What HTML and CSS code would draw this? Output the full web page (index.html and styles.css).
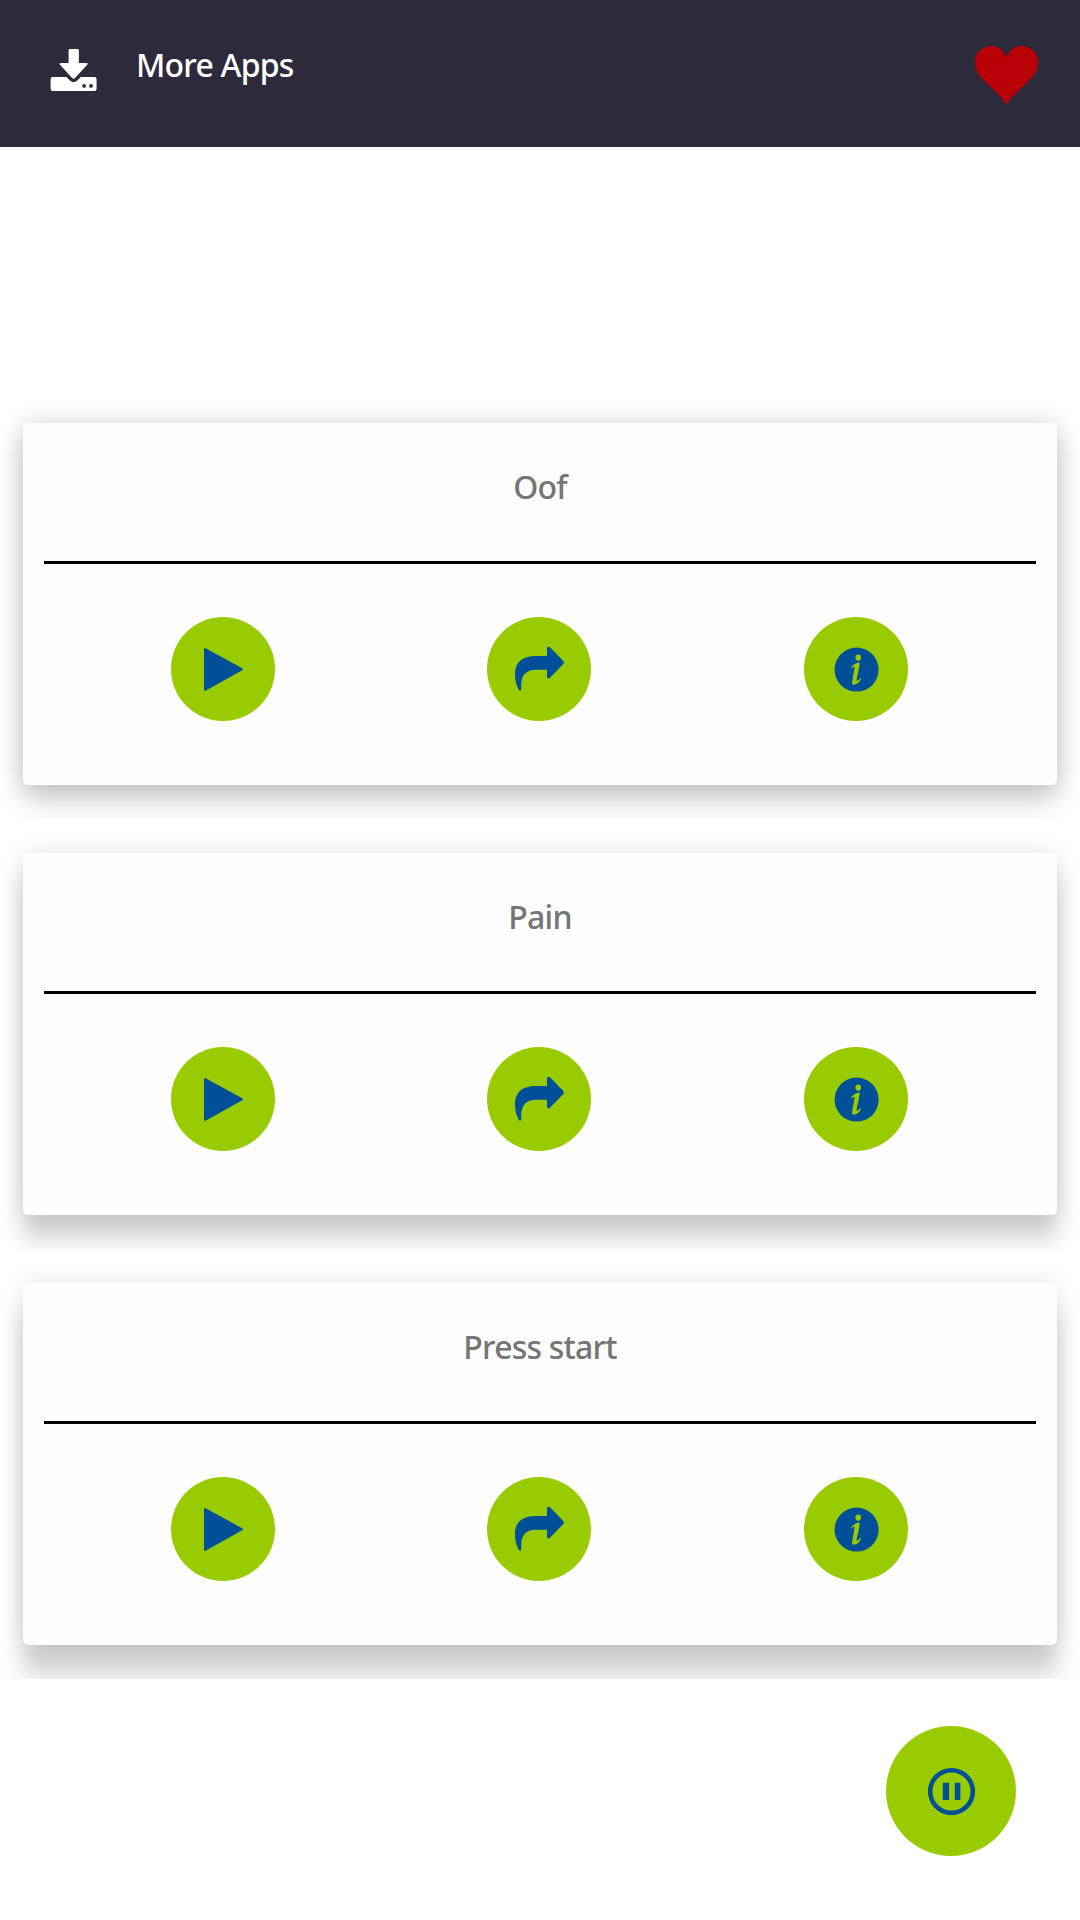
FILE: index.html
```html
<!DOCTYPE html>
<html lang="en">

<head>
    <meta charset="UTF-8">
    <meta name="viewport" content="width=device-width, initial-scale=1.0">
    <title>Sounds</title>
    <link rel="stylesheet" href="styles.css">
</head>

<body>
    <!-- icons used more than once -->
    <svg class="symbols">
        <symbol id="play" viewBox="0 0 104 104">
            <path d="M33 32.4Q33 30.4 35 31.4L71.2 51.3Q72.6 52.3 71.2 53.3L35 73.6Q33 74.6 33 72.6Z" />
        </symbol>
        <symbol id="share" viewBox="0 0 104 104">
            <path d="M60 39V31.5Q60 29.8 61.6 29.8Q62.4 29.8 63.2 30.6L76.3 44Q77.6 45.5 76.3 47L63.2 60.6Q62.4 61.5 61.4 61.5Q60 61.5 60 59.8V52.7H49C38 52.7 33.6 59 34.3 71C34.4 74.4 32.6 74.3 31.5 72.2C29 67.5 28 62.5 28 57C28 45 35.5 39 49 39Z" />
        </symbol>
        <symbol id="info" viewBox="0 0 104 104">
            <circle cx="52.6" cy="52.6" r="22" />
            <ellipse class="mark" cx="54.2" cy="40.6" rx="2.8" ry="3.1" />
            <path class="mark" d="M46.8 51.6C48.5 48.2 52 45.6 55.7 45.6C55.5 51 53.2 58.5 52.4 63.8C53.8 64 55.2 62.4 57.1 60.6C56.7 64.5 53 67.700 49.8 67.700C48.2 67.700 47.9 66.3 48.2 64.2L50.7 49.9C49.6 49.8 48.4 50.5 46.8 51.6Z" />
        </symbol>
    </svg>

    <header class="toolbar">
        <svg class="download" viewBox="0.4 0 46 42">
            <path d="M19.5 0h7.4q1.4 0 1.4 1.4V14h7.6q2.2 0 .7 1.7L24.5 28.9q-1.5 1.5-3 0L9.4 15.7Q8 14 10 14h8V1.4Q18 0 19.5 0Z" />
            <path fill-rule="evenodd" d="M2.2 28h13.6l3.8 3.8q3.4 2.7 6.8 0L30.2 28h13.6q2.200 0 2.200 2.200v9.600q0 2.200-2.200 2.200H2.200Q0 42 0 39.800v-9.600Q0 28 2.200 28ZM33.500 35a1.900 1.900 0 1 0 0 3.800a1.900 1.900 0 1 0 0-3.800ZM40.400 35a1.900 1.900 0 1 0 0 3.800a1.900 1.900 0 1 0 0-3.800Z" />
        </svg>
        <h1 class="title">More Apps</h1>
        <svg class="heart" viewBox="0 0 63 59">
            <path d="M31.5 59C28 52 21 46 14 39.5C6 32 0 26 0 16.5C0 7 7 0 16.5 0C23.5 0 28.5 4.2 31.5 11C34.5 4.2 39.5 0 46.5 0C56 0 63 7 63 16.5C63 26 57 32 49 39.5C42 46 35 52 31.5 59Z" />
        </svg>
    </header>

    <main class="list">
        <div class="item">
            <div class="card low">
                <h2 class="name">Oof</h2>
                <div class="buttons">
                    <button class="round"><svg><use href="#play" /></svg></button>
                    <button class="round"><svg><use href="#share" /></svg></button>
                    <button class="round"><svg><use href="#info" /></svg></button>
                </div>
            </div>
        </div>
        <div class="item">
            <div class="card mid">
                <h2 class="name">Pain</h2>
                <div class="buttons">
                    <button class="round"><svg><use href="#play" /></svg></button>
                    <button class="round"><svg><use href="#share" /></svg></button>
                    <button class="round"><svg><use href="#info" /></svg></button>
                </div>
            </div>
        </div>
        <div class="item">
            <div class="card high">
                <h2 class="name">Press start</h2>
                <div class="buttons">
                    <button class="round"><svg><use href="#play" /></svg></button>
                    <button class="round"><svg><use href="#share" /></svg></button>
                    <button class="round"><svg><use href="#info" /></svg></button>
                </div>
            </div>
        </div>
    </main>

    <footer class="bottom">
        <button class="round pause">
            <svg viewBox="0 0 130 130">
                <circle class="ring" cx="65.5" cy="65.5" r="21.3" />
                <path d="M56.8 56.8h6.3v17.2h-6.3zM68.800 56.8h5.600v17.2h-5.600z" />
            </svg>
        </button>
    </footer>
</body>

</html>
```

FILE: styles.css
```css
* {
    box-sizing: border-box;
}

body {
    margin: 0;
    min-height: 1920px;
    background-color: white;
    font-family: "Noto Sans", sans-serif;
}

.symbols {
    display: none;
}

.toolbar {
    display: flex;
    align-items: flex-start;
    height: 147px;
    padding: 0 42px 0 51px;
    background-color: #2c2a3b;
}

.download {
    width: 46px;
    height: 42px;
    margin-top: 49px;
    fill: white;
    overflow: visible;
}

.title,
.name {
    margin: 0;
    font-size: 32px;
    line-height: 44px;
    font-weight: 500;
    letter-spacing: -0.8px;
}

.title {
    margin: 43px auto 0 39px;
    color: white;
}

.heart {
    width: 63px;
    height: 59px;
    margin-top: 46px;
    fill: #b90007;
}

.list {
    padding-top: 242px;
}

.item {
    height: 430px;
    padding: 34px 23px;
    overflow: hidden;
}

.card {
    height: 362px;
    padding: 0 21px;
    border-radius: 5px;
    background-color: #fefefe;
}

/* the shadow drops further the lower the card is */
.low {
    box-shadow: 0 16px 28px rgba(0, 0, 0, 0.17), 0 0 26px rgba(0, 0, 0, 0.14);
}

.mid {
    box-shadow: 0 24px 24px rgba(0, 0, 0, 0.18), 0 0 24px rgba(0, 0, 0, 0.11);
}

.high {
    box-shadow: 0 30px 24px rgba(0, 0, 0, 0.18), 0 0 24px rgba(0, 0, 0, 0.1);
}

.name {
    height: 141px;
    padding-top: 42px;
    border-bottom: 3px solid black;
    text-align: center;
    color: #757575;
}

.buttons {
    display: grid;
    grid-template-columns: 316px 316px 317px;
    justify-items: center;
    padding: 53px 21px 0;
}

.round {
    width: 104px;
    height: 104px;
    padding: 0;
    border: none;
    border-radius: 50%;
    background-color: #9c0;
}

.round svg {
    display: block;
    width: 100%;
    height: 100%;
    fill: #004f98;
}

.mark {
    fill: #9c0;
}

.bottom {
    display: flex;
    justify-content: flex-end;
    padding: 47px 64px 0;
}

.pause {
    width: 130px;
    height: 130px;
}

.round .ring {
    fill: none;
    stroke: #004f98;
    stroke-width: 4.5;
}
```
